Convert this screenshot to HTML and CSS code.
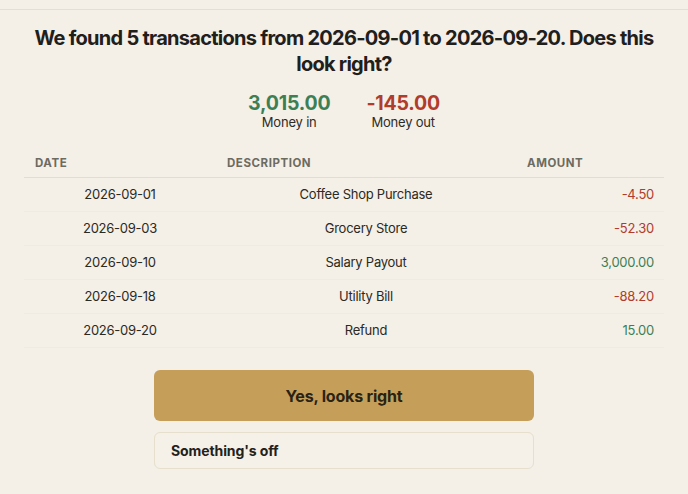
FILE: index.html
```html
<!DOCTYPE html>
<html>
<head>
<meta charset="utf-8">
<link rel="stylesheet" href="styles.css">
</head>
<body>
<div class="topbar"></div>
<main class="panel">
  <h1 class="title">We found 5 transactions from 2026-09-01 to 2026-09-20. Does this look right?</h1>
  <div class="summary">
    <div class="stat">
      <div class="stat-value pos">3,015.00</div>
      <div class="stat-label">Money in</div>
    </div>
    <div class="stat">
      <div class="stat-value neg">-145.00</div>
      <div class="stat-label">Money out</div>
    </div>
  </div>
  <table class="tx">
    <colgroup>
      <col class="c-date"><col class="c-desc"><col class="c-amt">
    </colgroup>
    <thead>
      <tr><th>Date</th><th>Description</th><th>Amount</th></tr>
    </thead>
    <tbody>
      <tr><td class="d">2026-09-01</td><td class="s">Coffee Shop Purchase</td><td class="a neg">-4.50</td></tr>
      <tr><td class="d">2026-09-03</td><td class="s">Grocery Store</td><td class="a neg">-52.30</td></tr>
      <tr><td class="d">2026-09-10</td><td class="s">Salary Payout</td><td class="a pos">3,000.00</td></tr>
      <tr><td class="d">2026-09-18</td><td class="s">Utility Bill</td><td class="a neg">-88.20</td></tr>
      <tr><td class="d">2026-09-20</td><td class="s">Refund</td><td class="a pos">15.00</td></tr>
    </tbody>
  </table>
  <div class="actions">
    <button class="btn-primary">Yes, looks right</button>
    <button class="btn-secondary">Something's off</button>
  </div>
</main>
</body>
</html>
```
FILE: styles.css
```css
html, body {
  margin: 0;
  padding: 0;
  background: #f4efe7;
  font-family: Inter, "Noto Sans", sans-serif;
  color: #22221c;
}
.topbar {
  height: 9px;
  border-bottom: 1px solid #e6dfcf;
}
.panel {
  padding: 15px 24px 0;
}
.title {
  margin: 0 auto;
  max-width: 640px;
  text-align: center;
  font-size: 20px;
  line-height: 26px;
  font-weight: 700;
  color: #1f201b;
  letter-spacing: -0.73px;
}
.summary {
  display: flex;
  justify-content: center;
  gap: 36px;
  margin-top: 15px;
}
.stat {
  text-align: center;
}
.stat-value {
  font-size: 19.5px;
  line-height: 22px;
  font-weight: 700;
  letter-spacing: -0.2px;
}
.stat-label {
  font-size: 13px;
  line-height: 16px;
  color: #2c2c26;
  letter-spacing: -0.2px;
}
.pos { color: #3d7f55; }
.neg { color: #b03c2c; }
.tx {
  width: 640px;
  border-collapse: collapse;
  margin-top: 18px;
  table-layout: fixed;
}
.c-date { width: 192px; }
.c-desc { width: 300px; }
.c-amt { width: 148px; }
.tx th {
  text-align: left;
  font-size: 11.5px;
  line-height: 14px;
  font-weight: 700;
  letter-spacing: 0.55px;
  text-transform: uppercase;
  color: #6c6b60;
  padding: 8px 10px 7px 11px;
  vertical-align: middle;
  border-bottom: 1px solid #e4ddcc;
}
.tx td {
  font-size: 13px;
  line-height: 16px;
  letter-spacing: -0.25px;
  padding: 8px 10px 9px;
  border-bottom: 1px solid #f0eadf;
  color: #2a2a23;
  vertical-align: middle;
}
.tx td.d, .tx td.s { text-align: center; }
.tx td.a { text-align: right; }
.tx td.a.pos { color: #3d7f55; }
.tx td.a.neg { color: #b03c2c; }
.actions {
  width: 380px;
  margin: 22px auto 0;
  display: flex;
  flex-direction: column;
  gap: 11px;
}
.btn-primary {
  height: 51px;
  border: none;
  border-radius: 6px;
  background: #c59f5a;
  color: #2a2313;
  font-family: inherit;
  font-size: 16px;
  font-weight: 700;
  letter-spacing: -0.2px;
}
.btn-secondary {
  height: 37px;
  border: 1px solid #e6dfcd;
  border-radius: 6px;
  background: #f5f0e8;
  color: #22221c;
  font-family: inherit;
  font-size: 14px;
  font-weight: 700;
  letter-spacing: -0.1px;
  text-align: left;
  padding: 0 16px;
}
```
